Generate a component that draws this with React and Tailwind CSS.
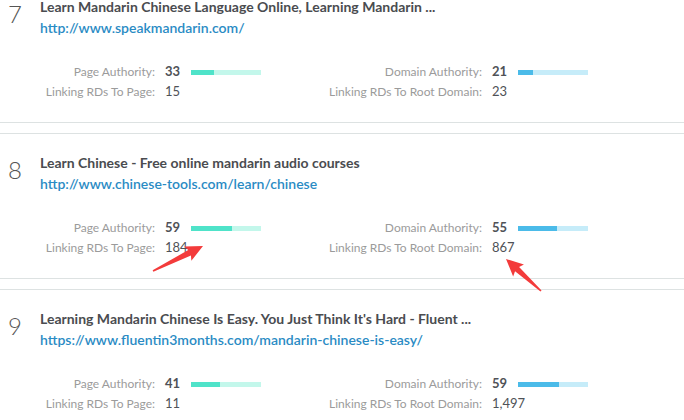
import React from "react";

const results = [
  {
    rank: 7,
    title: "Learn Mandarin Chinese Language Online, Learning Mandarin ...",
    url: "http://www.speakmandarin.com/",
    pa: 33,
    da: 21,
    pageLinks: "15",
    rootLinks: "23",
  },
  {
    rank: 8,
    title: "Learn Chinese - Free online mandarin audio courses",
    url: "http://www.chinese-tools.com/learn/chinese",
    pa: 59,
    da: 55,
    pageLinks: "184",
    rootLinks: "867",
  },
  {
    rank: 9,
    title: "Learning Mandarin Chinese Is Easy. You Just Think It's Hard - Fluent ...",
    url: "https://www.fluentin3months.com/mandarin-chinese-is-easy/",
    pa: 41,
    da: 59,
    pageLinks: "11",
    rootLinks: "1,497",
  },
];

const Bar = ({ value, fill, track }) => (
  <div className={`h-[5px] w-[70px] ${track}`}>
    <div className={`h-full ${fill}`} style={{ width: `${value}%` }} />
  </div>
);

const StatGroup = ({ labelW, top, bottom, value, count, fill, track }) => (
  <div className="flex flex-col">
    <div className="flex items-center h-[20px]">
      <span className={`${labelW} pr-[10px] text-right text-[12px] text-[#9b9b9b]`}>{top}</span>
      <span className="w-[26px] text-[13px] font-bold text-[#4f5257]">{value}</span>
      <Bar value={value} fill={fill} track={track} />
    </div>
    <div className="flex items-center h-[20px]">
      <span className={`${labelW} pr-[10px] text-right text-[12px] text-[#9b9b9b]`}>{bottom}</span>
      <span className="text-[13px] text-[#4f5257]">{count}</span>
    </div>
  </div>
);

const Arrow = ({ x1, y1, x2, y2 }) => {
  const dx = x2 - x1;
  const dy = y2 - y1;
  const L = Math.sqrt(dx * dx + dy * dy);
  const angle = (Math.atan2(dy, dx) * 180) / Math.PI;
  const d = `M0,-0.8 L${L - 15},-3 L${L - 17},-8 L${L},0 L${L - 17},8 L${L - 15},3 L0,0.8 Z`;
  return <path d={d} fill="#f33b3b" transform={`translate(${x1} ${y1}) rotate(${angle})`} />;
};

export default function App() {
  return (
    <div className="relative h-[420px] w-[684px] overflow-hidden bg-white font-['Lato','Liberation_Sans',sans-serif]">
      <div className="-mt-[23px] flex flex-col gap-[10px]">
        {results.map((r) => (
          <div key={r.rank} className="border-y border-[#dde2e2] pt-[19px] pb-[20px]">
            <div className="flex">
              <div className="w-[40px] pl-[8px] pt-[2px] text-[24px] font-light leading-[30px] text-[#555]">
                {r.rank}
              </div>
              <div className="flex flex-col">
                <div className="text-[14px] font-bold leading-[19px] text-[#4a4c50]">{r.title}</div>
                <div className="mt-[2px] text-[14px] font-semibold leading-[19px] text-[#2a8bc4]">{r.url}</div>
              </div>
            </div>
            <div className="mt-[25px] flex pl-[40px]">
              <div className="w-[252px]">
                <StatGroup
                  labelW="w-[125px]"
                  top="Page Authority:"
                  bottom="Linking RDs To Page:"
                  value={r.pa}
                  count={r.pageLinks}
                  fill="bg-[#4fe3c9]"
                  track="bg-[#c3f7eb]"
                />
              </div>
              <StatGroup
                labelW="w-[200px]"
                top="Domain Authority:"
                bottom="Linking RDs To Root Domain:"
                value={r.da}
                count={r.rootLinks}
                fill="bg-[#4bbbe9]"
                track="bg-[#c6ecf9]"
              />
            </div>
          </div>
        ))}
      </div>
      <svg className="absolute inset-0 pointer-events-none" width="684" height="420">
        <Arrow x1={153} y1={271} x2={203} y2={246} />
        <Arrow x1={541} y1={291} x2={506} y2={259} />
      </svg>
    </div>
  );
}
